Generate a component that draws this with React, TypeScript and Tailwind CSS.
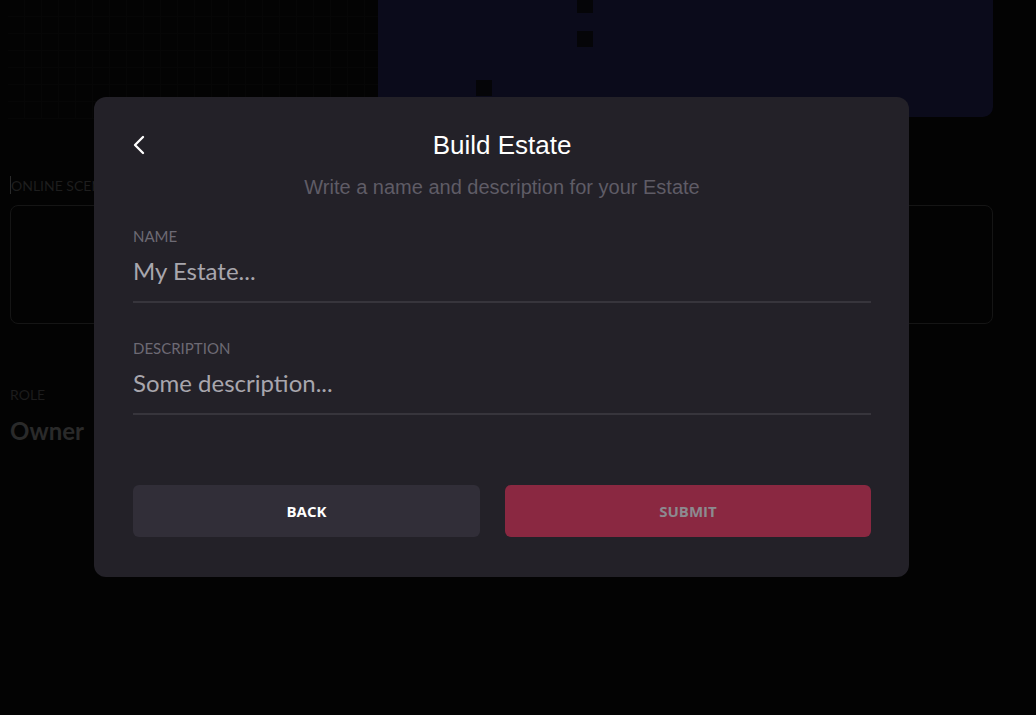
import { ChevronLeft } from 'lucide-react'

const cells = Array.from({ length: 22 * 7 })

export default function App() {
  return (
    <div className="relative w-[1036px] h-[715px] overflow-hidden bg-[#030303] font-['Lato',sans-serif]">
      {/* Page behind the dialog (dimmed) */}
      <div className="px-[10px]">
        <div className="flex h-[118px] gap-[2px]">
          <div className="grid grid-cols-[repeat(22,17px)] grid-rows-[repeat(7,17px)] w-[376px] -ml-[10px] pl-[8px]">
            {cells.map((_, i) => (
              <div key={i} className="border-r border-b border-[#060606]" />
            ))}
          </div>
          <div className="relative w-[615px] h-[117px] bg-[#0b0b1b] rounded-b-[10px]">
            <div className="absolute left-[199px] top-0 w-[16px] h-[13px] bg-[#050508]" />
            <div className="absolute left-[199px] top-[31px] w-[16px] h-[16px] bg-[#050508]" />
            <div className="absolute left-[98px] top-[80px] w-[16px] h-[16px] bg-[#050508]" />
          </div>
        </div>

        <div className="mt-[57px] flex items-center h-[20px] text-[14px] text-[#1e1e1e] uppercase">
          <span className="w-px h-[18px] bg-[#2a2a2a]" />
          Online Scenes
        </div>
        <div className="mt-[10px] w-[983px] h-[119px] rounded-[8px] border border-[#151515]" />

        <div className="mt-[61px] text-[14px] leading-[20px] text-[#1c1c1c] uppercase">Role</div>
        <div className="mt-[11px] text-[24px] leading-[30px] font-bold text-[#2a2a2a]">Owner</div>
      </div>

      {/* Dialog */}
      <div className="absolute left-[94px] top-[97px] w-[815px] rounded-[12px] bg-[#232128] pl-[39px] pr-[38px] pt-[32px] pb-[40px]">
        <div className="relative flex items-center justify-center h-[32px]">
          <button className="absolute left-[-10px] top-0 text-white">
            <ChevronLeft size={32} strokeWidth={1.75} />
          </button>
          <h1 className="font-['Liberation_Sans',Arial,sans-serif] text-[26px] leading-[32px] text-white">
            Build Estate
          </h1>
        </div>
        <p className="mt-3 text-center font-['Liberation_Sans',Arial,sans-serif] text-[20px] leading-[28px] text-[#5f5c66]">
          Write a name and description for your Estate
        </p>

        <div className="mt-[25px] flex flex-col">
          <label className="text-[15px] leading-[20px] uppercase text-[#6d6a74]">Name</label>
          <div className="mt-[9px] pb-[14px] border-b-2 border-[#37353c]">
            <div className="h-[32px] text-[24px] leading-[32px] text-[#a8a6ad]">My Estate...</div>
          </div>
        </div>

        <div className="mt-[35px] flex flex-col">
          <label className="text-[15px] leading-[20px] uppercase text-[#6d6a74]">Description</label>
          <div className="mt-[9px] pb-[14px] border-b-2 border-[#37353c]">
            <div className="h-[32px] text-[24px] leading-[32px] text-[#a8a6ad]">Some description...</div>
          </div>
        </div>

        <div className="mt-[70px] flex gap-[25px] font-['Open_Sans',sans-serif]">
          <button className="w-[347px] h-[52px] rounded-[6px] bg-[#312e38] text-[15px] font-bold text-white">
            BACK
          </button>
          <button className="flex-1 h-[52px] rounded-[6px] bg-[#8a2841] text-[15px] font-bold text-[#8c8a8f]">
            SUBMIT
          </button>
        </div>
      </div>
    </div>
  )
}
